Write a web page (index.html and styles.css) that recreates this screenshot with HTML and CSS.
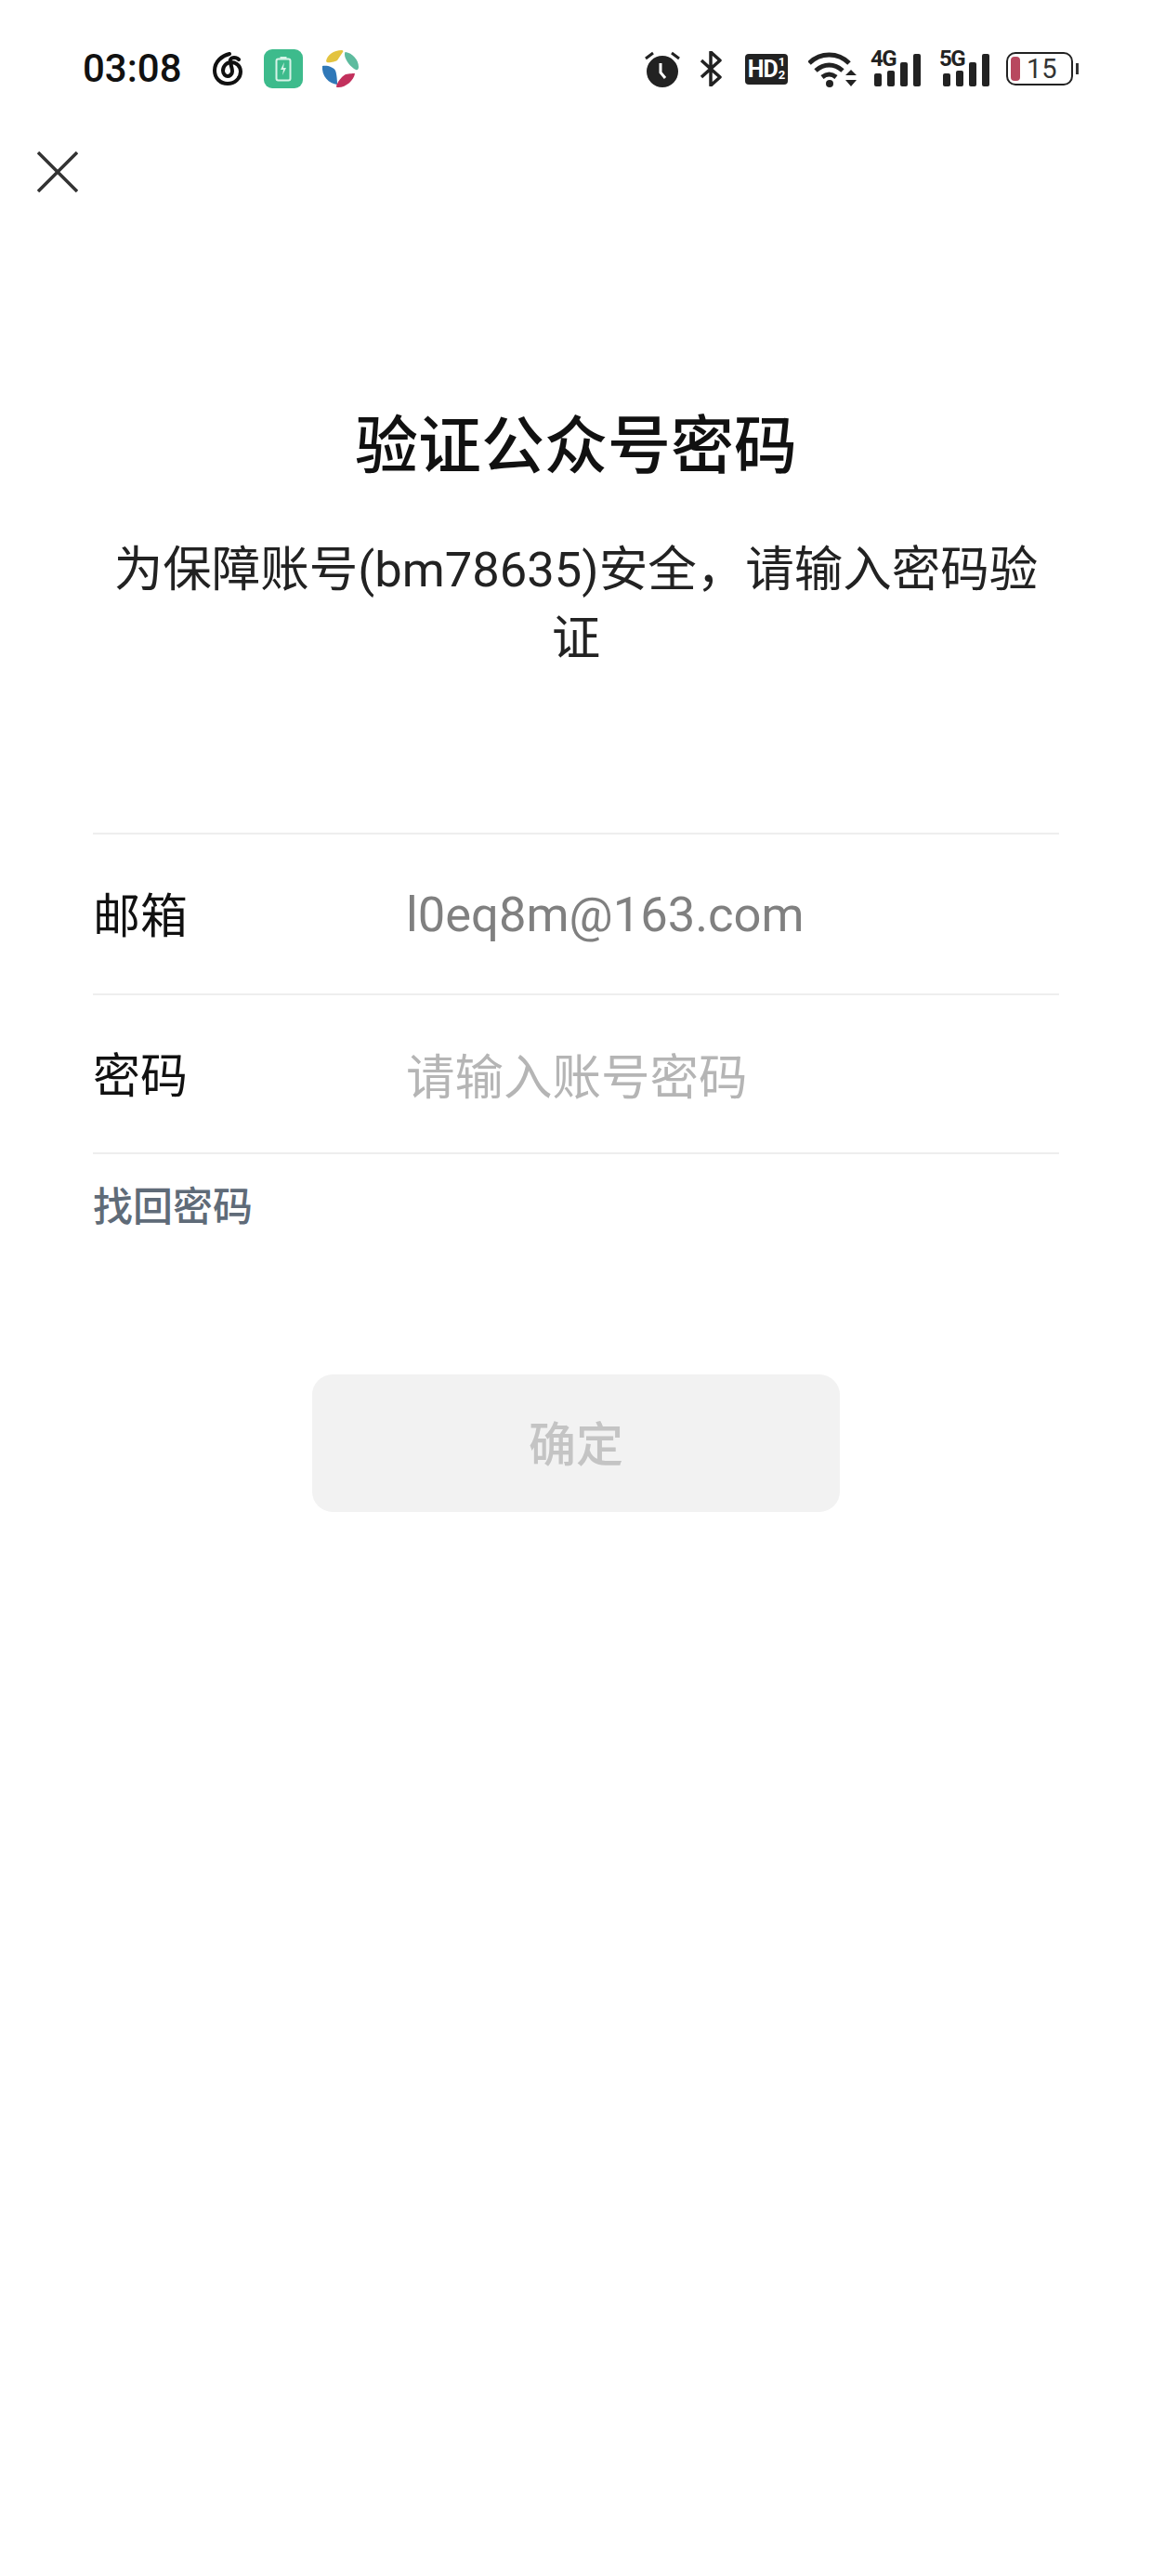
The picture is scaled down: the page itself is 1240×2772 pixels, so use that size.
FILE: index.html
```html
<!DOCTYPE html>
<html lang="zh">
<head>
<meta charset="utf-8">
<title>验证公众号密码</title>
<link rel="stylesheet" href="styles.css">
</head>
<body>
<div class="page">
  <header class="status">
    <div class="status-left">
      <span class="time">03:08</span>
      <svg class="ic-music" viewBox="0 0 34 36"><path d="M19 2C11 4 3 10 3 20c0 8 6 14 14 14s14-6 14-13c0-6-5-10-10-10s-9 4-9 9c0 4 3 6 5 6s5-2 5-5c0-3-1-6-2-9-1-3 0-6 4-6 2 0 4 1 5 2" fill="none" stroke="#111" stroke-width="4" stroke-linecap="round"/></svg>
      <svg class="ic-green" viewBox="0 0 42 42"><rect width="42" height="42" rx="9" fill="#3dbb8c"/><rect x="13.500" y="10.500" width="15" height="23" rx="2" fill="none" stroke="#d8f3e8" stroke-width="2"/><rect x="17.500" y="8" width="7" height="3" fill="#d8f3e8"/><path d="M22 14l-4 8h3l-1 6 4-8h-3z" fill="#d8f3e8"/></svg>
      <svg class="ic-color" viewBox="0 0 42 42"><path d="M5 13C6 6 13 1 22 1c1 0 2 1 1 2l-6 9c-1 1-9 3-11 2z" fill="#e3c33f"/><path d="M26 3c7 1 14 8 14 16 0 2-1 4-3 3-5-2-12-11-12-16 0-2 0-3 1-3z" fill="#5dbb9e"/><path d="M1 18c5-1 12 1 14 5 1 2 2 9 2 15C8 37 0 29 1 18z" fill="#2f78b8"/><path d="M16 40c1-5 6-11 10-13 4-1 9-1 10-1-1 7-9 15-18 15-1 0-2 0-2-1z" fill="#c2305c"/></svg>
    </div>
    <div class="status-right">
      <svg class="ic-alarm" viewBox="0 0 38 39"><circle cx="19" cy="22" r="17" fill="#222"/><path d="M1 8l8-6M37 8l-8-6" stroke="#222" stroke-width="3"/><path d="M17 13v10l5 6" fill="none" stroke="#fff" stroke-width="3"/></svg>
      <svg class="ic-bt" viewBox="0 0 24 38"><path d="M2 10l20 18-10 9V1l10 9L2 28" fill="none" stroke="#222" stroke-width="3.500" stroke-linejoin="round"/></svg>
      <div class="hd"><span class="hd-main">HD</span><span class="hd-frac"><span>1</span><span>2</span></span></div>
      <svg class="ic-wifi" viewBox="0 0 52 41"><path d="M1 14C13 2 32 2 44 14M8 22c9-8 20-8 29 0M15 29c5-4 10-4 15 0" fill="none" stroke="#222" stroke-width="5"/><circle cx="23" cy="36" r="4" fill="#222"/><path d="M40 27l6-6 6 6zM40 32h12l-6 7z" fill="#222"/></svg>
      <div class="signal"><span class="net">4G</span><i class="b1"></i><i class="b2"></i><i class="b3"></i><i class="b4"></i></div>
      <div class="signal signal-5g"><span class="net">5G</span><i class="b1"></i><i class="b2"></i><i class="b3"></i><i class="b4"></i></div>
      <div class="battery"><div class="cell"><i class="level"></i><span class="pct">15</span></div><i class="tip"></i></div>
    </div>
  </header>
  <button class="close" aria-label="关闭"><svg viewBox="0 0 44 44"><path d="M1 1l42 42M43 1L1 43" stroke="#333" stroke-width="3.500" fill="none"/></svg></button>
  <main class="main">
    <h1 class="title">验证公众号密码</h1>
    <p class="desc">为保障账号(bm78635)安全，请输入密码验证</p>
    <div class="form">
      <div class="row row-a"><span class="label">邮箱</span><span class="value">l0eq8m@163.com</span></div>
      <div class="row row-b"><span class="label">密码</span><span class="placeholder">请输入账号密码</span></div>
    </div>
    <a class="recover">找回密码</a>
    <button class="confirm">确定</button>
  </main>
</div>
</body>
</html>
```
FILE: styles.css
```css
* { box-sizing: border-box; }
html, body { margin: 0; padding: 0; background: #fff; }
body { font-family: "Roboto", "Noto Sans CJK SC", sans-serif; color: #111; }
.page { width: 1240px; height: 2772px; overflow: hidden; }

.status { height: 148px; display: flex; justify-content: space-between; align-items: center; padding: 0 79px 0 89px; }
.status-left, .status-right { display: flex; align-items: center; }
.time { font-size: 42px; font-weight: 500; width: 106px; line-height: 48px; white-space: nowrap; color: #111; }
.ic-music { width: 34px; height: 36px; margin-left: 33px; }
.ic-green { width: 42px; height: 42px; margin-left: 22px; }
.ic-color { width: 42px; height: 42px; margin-left: 20px; }
.ic-alarm { width: 38px; height: 39px; }
.ic-bt { width: 24px; height: 38px; margin-left: 21px; }
.hd { width: 46px; height: 33px; margin-left: 25px; background: #222; border-radius: 4px; color: #fff; display: flex; align-items: center; justify-content: center; font-weight: 700; overflow: hidden; }
.hd-main { font-size: 25px; letter-spacing: -1px; line-height: 33px; font-family: "Roboto", sans-serif; }
.hd-frac { display: flex; flex-direction: column; font-size: 13px; line-height: 14px; margin-left: 1px; }
.ic-wifi { width: 52px; height: 41px; margin-left: 22px; }
.signal { width: 55px; height: 38px; margin-left: 15px; display: grid; grid-template-columns: repeat(4, 8px); column-gap: 6px; align-items: end; position: relative; padding-left: 4px; }
.signal-5g { margin-left: 19px; }
.signal i { display: block; background: #222; border-radius: 2px; }
.signal .b1 { height: 14px; }
.signal .b2 { height: 17px; }
.signal .b3 { height: 26px; }
.signal .b4 { height: 35px; }
.net { position: absolute; left: 0; top: -5px; font-size: 24px; line-height: 26px; font-weight: 700; letter-spacing: -1.500px; color: #222; }
.battery { display: flex; align-items: center; margin-left: 17px; }
.cell { width: 72px; height: 36px; border: 2.500px solid #222; border-radius: 10px; display: flex; align-items: center; padding-left: 3px; }
.level { width: 10px; height: 26px; background: #b8485f; border-radius: 4px; }
.pct { font-size: 29px; line-height: 30px; margin-left: 7px; color: #333; }
.tip { width: 3px; height: 12px; margin-left: 3px; background: #333; }

.close { display: block; width: 44px; height: 44px; margin: 15px 0 0 40px; padding: 0; border: 0; background: none; }
.close svg { display: block; width: 44px; height: 44px; }

.main { padding: 0 100px; display: flex; flex-direction: column; align-items: stretch; font-family: "Noto Sans CJK SC", sans-serif; }
.title { margin: 220px 0 0; font-size: 68px; line-height: 96px; font-weight: 500; text-align: center; color: #111; }
.desc { margin: 53px 0 0; padding: 0 20px; font-size: 52.500px; line-height: 74px; text-align: center; color: #222; font-family: "Roboto", "Noto Sans CJK SC", sans-serif; }
.form { margin-top: 172px; border-top: 2px solid #eee; }
.row { border-bottom: 2px solid #eee; display: flex; align-items: center; }
.row-a { height: 173px; }
.row-b { height: 171px; }
.label { width: 337px; padding-bottom: 4px; font-size: 51px; line-height: 70px; color: #111; }
.value { font-size: 52.500px; line-height: 70px; color: #808080; font-family: "Roboto", sans-serif; }
.placeholder { padding-bottom: 1px; font-size: 52.500px; line-height: 70px; color: #b5b5b5; }
.recover { margin-top: 23px; font-size: 43px; line-height: 60px; font-weight: 500; color: #5f6b78; }
.confirm { align-self: center; width: 568px; height: 148px; margin-top: 154px; border: 0; border-radius: 22px; background: #f2f2f2; color: #c4c4c4; font-family: inherit; font-size: 51px; font-weight: 500; padding: 0 0 4px; }
```
